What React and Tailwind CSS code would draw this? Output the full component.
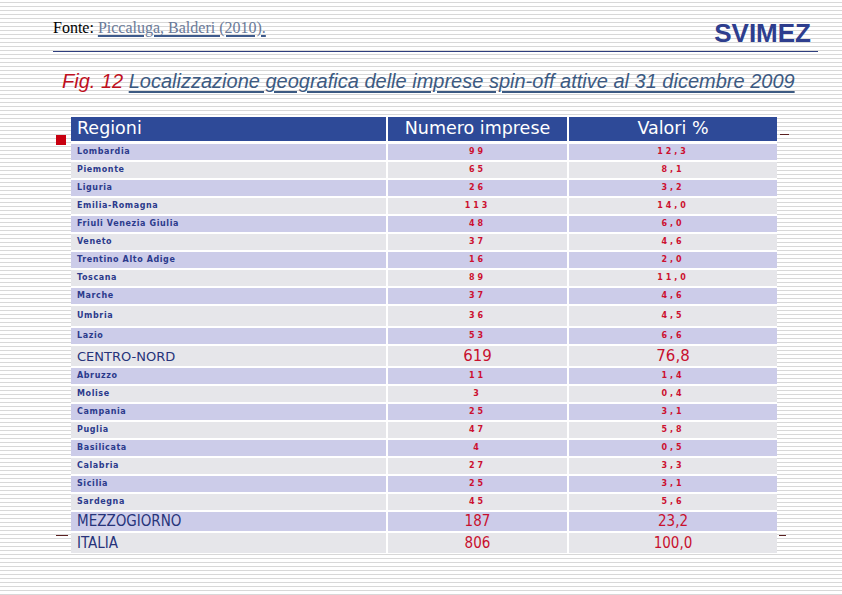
const rows = [
  { name: "Lombardia", n: "99", v: "12,3", h: "h-[16px]" },
  { name: "Piemonte", n: "65", v: "8,1", h: "h-[16px]" },
  { name: "Liguria", n: "26", v: "3,2", h: "h-[16px]" },
  { name: "Emilia-Romagna", n: "113", v: "14,0", h: "h-[16px]" },
  { name: "Friuli Venezia Giulia", n: "48", v: "6,0", h: "h-[16px]" },
  { name: "Veneto", n: "37", v: "4,6", h: "h-[16px]" },
  { name: "Trentino Alto Adige", n: "16", v: "2,0", h: "h-[16px]" },
  { name: "Toscana", n: "89", v: "11,0", h: "h-[16px]" },
  { name: "Marche", n: "37", v: "4,6", h: "h-[16px]" },
  { name: "Umbria", n: "36", v: "4,5", h: "h-[20px]" },
  { name: "Lazio", n: "53", v: "6,6", h: "h-[16px]" },
  { name: "CENTRO-NORD", n: "619", v: "76,8", h: "h-[20px]", kind: "mid" },
  { name: "Abruzzo", n: "11", v: "1,4", h: "h-[16px]" },
  { name: "Molise", n: "3", v: "0,4", h: "h-[16px]" },
  { name: "Campania", n: "25", v: "3,1", h: "h-[16px]" },
  { name: "Puglia", n: "47", v: "5,8", h: "h-[16px]" },
  { name: "Basilicata", n: "4", v: "0,5", h: "h-[16px]" },
  { name: "Calabria", n: "27", v: "3,3", h: "h-[16px]" },
  { name: "Sicilia", n: "25", v: "3,1", h: "h-[16px]" },
  { name: "Sardegna", n: "45", v: "5,6", h: "h-[16px]" },
  { name: "MEZZOGIORNO", n: "187", v: "23,2", h: "h-[19px]", kind: "tot" },
  { name: "ITALIA", n: "806", v: "100,0", h: "h-[20px]", kind: "tot" },
];

const dejavu = "font-['DejaVu_Sans',sans-serif]";
const narrow = "font-['DejaVu_Sans_Condensed','Liberation_Sans_Narrow','DejaVu_Sans',sans-serif]";

function Row({ row, index }) {
  const bg = index % 2 === 0 ? "bg-[#cccce9]" : "bg-[#e6e6ea]";
  let nameCls = `${dejavu} text-[8px] font-bold tracking-[0.6px] text-[#2b3a8c]`;
  let numCls = `${dejavu} text-[8px] font-bold tracking-[3px] text-[#cc1030]`;
  if (row.kind === "mid") {
    nameCls = `${dejavu} text-[13px] text-[#26337a]`;
    numCls = `${dejavu} text-[15px] text-[#c8102e]`;
  }
  if (row.kind === "tot") {
    nameCls = `${narrow} text-[15px] text-[#26337a]`;
    numCls = `${narrow} text-[15px] text-[#c8102e]`;
  }
  return (
    <div className={`grid grid-cols-[315px_179px_208px] gap-x-[2px] ${row.h}`}>
      <div className={`${bg} flex items-center pl-[6px] leading-none ${nameCls}`}>{row.name}</div>
      <div className={`${bg} flex items-center justify-center leading-none ${numCls}`}>{row.n}</div>
      <div className={`${bg} flex items-center justify-center leading-none ${numCls}`}>{row.v}</div>
    </div>
  );
}

function App() {
  return (
    <div className="relative w-[842px] h-[595px] overflow-hidden bg-[repeating-linear-gradient(to_bottom,#ffffff_0px,#ffffff_2px,#d8d8d8_2px,#d8d8d8_3px,#ffffff_3px,#ffffff_4px)]">
      <div className="flex flex-col ml-[53px] mr-[24px] pt-[20px]">
        <div className="flex items-end justify-between mr-[7px]">
          <div className="font-['Liberation_Serif',serif] text-[16px] leading-none pb-[11px]">
            <span className="text-black">Fonte: </span>
            <span className="text-[#6a7a98] underline decoration-[#3d5a8c] decoration-2 underline-offset-[2px]">
              Piccaluga, Balderi (2010).
            </span>
          </div>
          <div className="font-['Liberation_Sans',sans-serif] font-bold text-[26px] leading-none text-[#2e3e8e] pb-[1px]">
            SVIMEZ
          </div>
        </div>
        <div className="mt-[4px] h-px bg-[#2e3e7e]" />
        <div className="mt-[19px] ml-[9px] font-['Liberation_Sans',sans-serif] italic text-[20px] leading-none whitespace-nowrap">
          <span className="text-[#c0101e]">Fig. 12 </span>
          <span className="text-[#3c5a82] underline decoration-[#3c5a82] decoration-2 underline-offset-[3px]">
            Localizzazione geografica delle imprese spin-off attive al 31 dicembre 2009
          </span>
        </div>
      </div>

      <div className="absolute left-[56px] top-[135px] w-[10px] h-[10px] bg-[#c80010]" />
      <div className="absolute left-[780px] top-[134px] w-[9px] h-px bg-[#5a2020]" />
      <div className="absolute left-[56px] top-[535px] w-[12px] h-px bg-[#5a2020]" />
      <div className="absolute left-[779px] top-[535px] w-[7px] h-px bg-[#5a2020]" />

      <div className="absolute left-[71px] top-[117px] w-[706px] bg-white flex flex-col gap-y-[2px]">
        <div className={`grid grid-cols-[315px_179px_208px] gap-x-[2px] h-[24px] mb-[1px] ${dejavu} text-white text-[17.5px] leading-none`}>
          <div className="bg-[#2e4a98] flex items-center pl-[6px]">Regioni</div>
          <div className="bg-[#2e4a98] flex items-center justify-center">Numero imprese</div>
          <div className="bg-[#2e4a98] flex items-center justify-center">Valori %</div>
        </div>
        {rows.map((row, i) => (
          <Row key={row.name} row={row} index={i} />
        ))}
      </div>
    </div>
  );
}

export default App;
